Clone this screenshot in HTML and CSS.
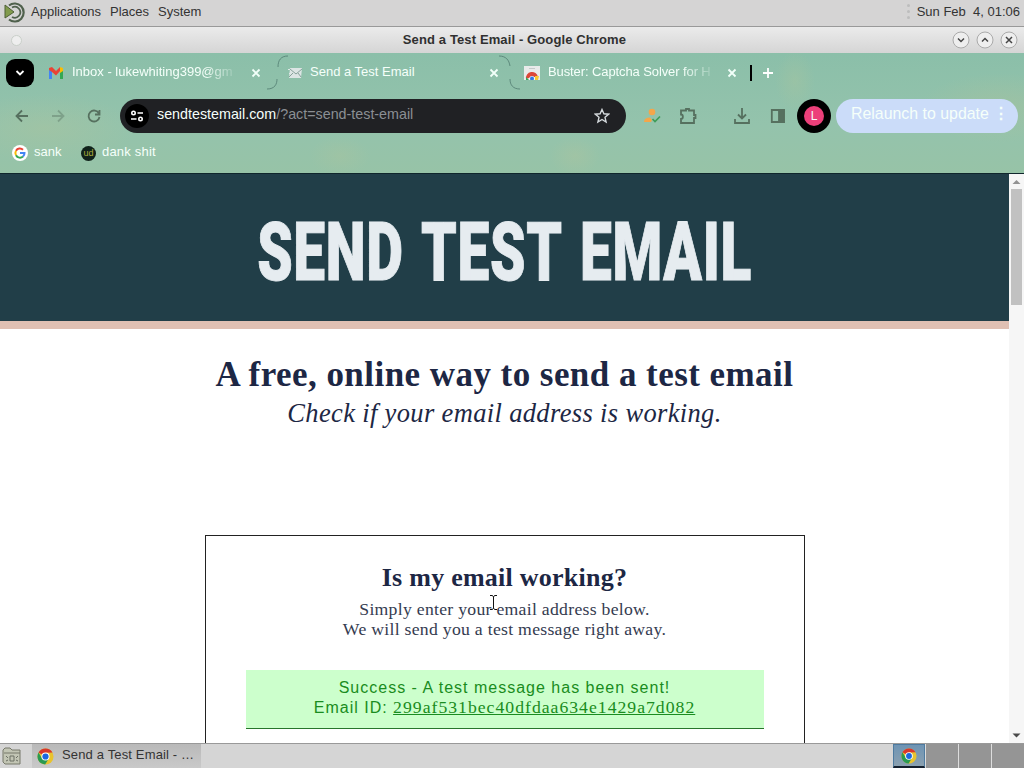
FILE: index.html
```html
<!DOCTYPE html>
<html lang="en">
<head>
  <meta charset="UTF-8">
  <title>Send a Test Email</title>
  <link rel="stylesheet" href="styles.css">
</head>
<body>
  <svg width="0" height="0" class="defs">
    <symbol id="chrome" viewBox="0 0 18 18">
      <circle cx="9" cy="9" r="8.5" fill="#e8c32e"/>
      <path d="M9 9 1.6 4.8A8.5 8.5 0 0 1 16.4 4.8L9 5z" fill="#d8372c"/>
      <path d="M1.6 4.8A8.5 8.5 0 0 0 8.6 17.5L12.5 11 9 9 5.4 11z" fill="#299a51"/>
      <circle cx="9" cy="9" r="4.3" fill="#fff"/>
      <circle cx="9" cy="9" r="3.3" fill="#1b67e0"/>
    </symbol>
    <symbol id="close" viewBox="0 0 10 10">
      <path d="M1.5 1.5l7 7M8.5 1.5l-7 7" stroke="#f2fff9" stroke-width="1.8"/>
    </symbol>
  </svg>

  <div class="panel">
    <svg class="mate" width="22" height="22" viewBox="0 0 22 22" fill="none">
      <path d="M1 4l9 7-9 6z" fill="#829b4d" stroke="#4e6036"/>
      <path d="M5 4.500A9 9 0 1 1 5 18.500" stroke="#50614d" stroke-width="2.200"/>
      <path d="M8 6.500A5.500 5.500 0 1 1 8 16" stroke="#50614d" stroke-width="1.800"/>
    </svg>
    <span class="apps">Applications</span>
    <span class="places">Places</span>
    <span>System</span>
    <span class="dots"><i></i><i></i><i></i></span>
    <span class="clock">Sun Feb&nbsp; 4, 01:06</span>
  </div>

  <div class="titlebar">
    <span class="win-menu"></span>
    <span class="win-title">Send a Test Email - Google Chrome</span>
    <span class="win-btns">
      <svg width="18" height="18" viewBox="0 0 18 18"><circle cx="9" cy="9" r="8"/><path d="M6 7.500l3 3 3-3"/></svg>
      <svg width="18" height="18" viewBox="0 0 18 18"><circle cx="9" cy="9" r="8"/><path d="M6 10.500l3-3 3 3"/></svg>
      <svg width="18" height="18" viewBox="0 0 18 18"><circle cx="9" cy="9" r="8"/><path d="M6 6l6 6M12 6l-6 6"/></svg>
    </span>
  </div>

  <div class="browser">
    <div class="tabs">
      <span class="tab-search"><svg width="10" height="8" viewBox="0 0 10 8"><path d="M1.500 2l3.500 3.500L8.500 2" fill="none" stroke="#fff" stroke-width="1.800"/></svg></span>
      <div class="tab tab-1">
        <svg width="16" height="14" viewBox="0 0 16 14">
          <path d="M1 2v11h3V5z" fill="#4285f4"/><path d="M12 5v8h3V2z" fill="#34a853"/>
          <path d="M1 2l3-1 4 4 4-4v4L8 9.500 4 6 1 4z" fill="#ea4335"/><path d="M12 1l3 1v3l-3 2z" fill="#fbbc04"/>
        </svg>
        <span class="tab-text fade">Inbox - lukewhiting399@gm</span>
        <svg width="10" height="10"><use href="#close"/></svg>
      </div>
      <svg class="curve" width="24" height="36" viewBox="0 0 24 36"><path d="M1 34c8 0 10-5 10-10M12 12C12 5 15 1 22 1"/></svg>
      <div class="tab tab-2">
        <svg width="14" height="10" viewBox="0 0 14 10"><path d="M0 1h3v1H0zM1 5h3v1H1z" fill="#dfe9e7"/><path d="M2 0h12l-1 10H1z" fill="#dce5e4"/><path d="M2 1l6 5 6-5M1 9l4-4M13 9l-3-4" stroke="#88a29b" fill="none"/></svg>
        <span class="tab-text">Send a Test Email</span>
        <svg width="10" height="10"><use href="#close"/></svg>
      </div>
      <svg class="curve" width="24" height="36" viewBox="0 0 24 36"><path d="M1 1c7 0 10 4 11 10M12 24c0 6 3 10 10 10"/></svg>
      <div class="tab tab-3">
        <svg width="16" height="14" viewBox="0 0 16 14"><path d="M0 0h16v14H0z" fill="#e9ebea"/><path d="M5 2.500h6" stroke="#c5caca"/><path d="M2 13a6 6 0 0 1 12-2H8z" fill="#dc4738"/><path d="M2 11l3 3H2z" fill="#35a75a"/><path d="M11 10h4l-1 4h-3z" fill="#f5c934"/><circle cx="8" cy="12.500" r="2.600" fill="#fff"/><circle cx="8" cy="12.500" r="2" fill="#3579e1"/></svg>
        <span class="tab-text fade">Buster: Captcha Solver for H</span>
        <svg width="10" height="10"><use href="#close"/></svg>
      </div>
      <span class="tab-bar"></span>
      <svg width="12" height="12" viewBox="0 0 12 12"><path d="M6 1v10M1 6h10" stroke="#fff" stroke-width="1.800"/></svg>
    </div>

    <div class="toolbar">
      <svg class="nav" width="16" height="16" viewBox="0 0 16 16"><path d="M14 8H3M8 2.500L2.500 8 8 13.500"/></svg>
      <svg class="nav off" width="16" height="16" viewBox="0 0 16 16"><path d="M2 8H13M8 2.500L13.500 8 8 13.500"/></svg>
      <svg class="nav" width="16" height="16" viewBox="0 0 16 16"><path d="M13 5.500A5.500 5.500 0 1 0 13.500 9M13.500 2v4.500H9"/></svg>
      <div class="address">
        <span class="site-info"><svg width="14" height="12" viewBox="0 0 14 12" fill="none" stroke="#fff" stroke-width="1.600"><circle cx="3.500" cy="3" r="1.700"/><path d="M7.500 3H13M1 9h5.500"/><circle cx="10.500" cy="9" r="1.700"/></svg></span>
        <span class="url">sendtestemail.com<b>/?act=send-test-email</b></span>
        <svg width="16" height="16" viewBox="0 0 16 16"><path d="M8 1.500l1.900 4.300 4.700.4L11 9.300l1.100 4.700L8 11.500 3.900 14 5 9.300 1.400 6.200l4.700-.4z" fill="none" stroke="#d5dadd" stroke-width="1.400"/></svg>
      </div>
      <svg class="ext" width="18" height="16" viewBox="0 0 18 16"><circle cx="9" cy="4" r="3.300" fill="#f4a64a"/><path d="M1 14c0-3 2-4.500 6-4.500l2 2.500-1 2z" fill="#f4a64a"/><path d="M9.500 11l2.500 2.500L17 8.500" fill="none" stroke="#3e9c58" stroke-width="1.700"/></svg>
      <svg class="puzzle" width="18" height="18" viewBox="0 0 18 18"><path d="M2 3.500h5V2h3v1.500h5V8h1.500v3H15v5H2v-4c2.500 0 2.500-4.500 0-4.500z"/></svg>
      <svg class="download" width="18" height="18" viewBox="0 0 18 18"><path d="M9 1v10M5 7.500l4 4 4-4M2 12v4h14v-4"/></svg>
      <svg class="side" width="16" height="16" viewBox="0 0 16 16"><path d="M1.800 2h12v12h-12z"/><path d="M9 2h5v12H9z" fill="#56705f"/></svg>
      <span class="avatar"><i>L</i></span>
      <span class="relaunch">Relaunch to update <i>⋮</i></span>
    </div>

    <div class="bookmarks">
      <svg width="16" height="16" viewBox="0 0 16 16" fill="none" stroke-width="2"><circle cx="8" cy="8" r="8" fill="#fff"/><path d="M4 5.800a4.500 4.500 0 0 1 7-1" stroke="#ea4335"/><path d="M4 5.800a4.500 4.500 0 0 0 0 4.500" stroke="#fbbc04"/><path d="M4 10.300a4.500 4.500 0 0 0 7 1.200" stroke="#34a853"/><path d="M8 8h4.500a4.500 4.500 0 0 1-1.500 3.500" stroke="#4285f4"/></svg>
      <span class="sank">sank</span>
      <span class="ud">ud</span>
      <span class="dank">dank shit</span>
    </div>
  </div>

  <div class="view">
    <div class="page">
      <header><h1>SEND TEST EMAIL</h1></header>
      <h2>A free, online way to send a test email</h2>
      <p class="tagline">Check if your email address is working.</p>
      <div class="box">
        <h3>Is my email working?</h3>
        <p class="line-1">Simply enter your email address below.</p>
        <p class="line-2">We will send you a test message right away.</p>
        <div class="success">
          <div class="sent">Success - A test message has been sent!</div>
          <div class="id-row"><span>Email ID:</span> <a>299af531bec40dfdaa634e1429a7d082</a></div>
        </div>
      </div>
    </div>
    <div class="scroll">
      <svg width="15" height="15" viewBox="0 0 15 15"><path d="M3.500 10h8L7.500 6z" fill="#929292"/></svg>
      <span class="thumb"></span>
      <svg width="15" height="15" viewBox="0 0 15 15"><path d="M3.500 5.500h8l-4 4z" fill="#4a4a4a"/></svg>
    </div>
    <svg class="cursor" width="9" height="17" viewBox="0 0 9 17"><path d="M1 1.500h2.500L4.500 3l1-1.500H8M4.500 3v11M1 15.500h2.500l1-1.500 1 1.500H8" fill="none" stroke="#111"/></svg>
  </div>

  <div class="taskbar">
    <svg class="files" width="20" height="19" viewBox="0 0 20 19"><path d="M1 15V3l2-2h5l2 2h8v14H3z" fill="#c2c5b4" stroke="#77796b"/><path d="M2 6h16" stroke="#77796b"/><path d="M8 9h4v5H8zM4 9l2 2M16 9l-2 2M4 14l2-1M16 14l-2-1" fill="none" stroke="#6d7065"/></svg>
    <span class="task"><svg width="17" height="17"><use href="#chrome"/></svg><span>Send a Test Email - …</span></span>
    <div class="workspaces">
      <span class="current"><svg width="16" height="16"><use href="#chrome"/></svg></span><span></span><span></span><span></span>
    </div>
  </div>
</body>
</html>
```

FILE: styles.css
```css
* {
  box-sizing: border-box;
}
body {
  margin: 0;
  width: 1024px;
  height: 768px;
  overflow: hidden;
  font-family: "Liberation Sans", Arial, sans-serif;
  font-size: 13px;
  color: #333;
  display: flex;
  flex-direction: column;
}
h1, h2, h3, p {
  margin: 0;
  white-space: nowrap;
}
i {
  font-style: normal;
}
svg {
  flex: none;
}
.defs {
  position: absolute;
}

/* desktop panel */
.panel {
  height: 27px;
  flex: none;
  background: #d5d4d4;
  border-bottom: 1px solid #999;
  display: flex;
  align-items: center;
  padding: 0 4px 2px 4px;
}
.panel > span {
  padding-bottom: 2px;
}
.apps {
  margin-left: 5px;
  width: 79px;
}
.places {
  width: 48px;
}
.dots {
  margin-left: auto;
  margin-right: 7px;
  display: grid;
  gap: 3px;
}
.dots i {
  width: 3px;
  height: 3px;
  border-radius: 2px;
  background: #bdbdbd;
}
.titlebar {
  height: 26px;
  flex: none;
  background: linear-gradient(#ebebeb, #d5d5d5);
  display: grid;
  grid-template-columns: 80px 1fr 75px;
  align-items: center;
}
.win-menu {
  width: 11px;
  height: 11px;
  margin-left: 11px;
  border-radius: 50%;
  border: 1px solid #c9cfc9;
  background: #eee;
}
.win-title {
  font-weight: bold;
  font-size: 13px;
  letter-spacing: .12px;
  text-align: center;
  padding-bottom: 2px;
  color: #303030;
}
.win-btns {
  display: flex;
  gap: 6px;
  margin-left: 3px;
}
.win-btns circle {
  fill: #eee;
  stroke: #aaa;
}
.win-btns path {
  fill: none;
  stroke: #444;
  stroke-width: 1.5;
}

/* browser */
.browser {
  height: 121px;
  flex: none;
  border-bottom: 1px solid #10262c;
  color: #f5fffa;
  background:
    radial-gradient(ellipse 90px 34px at 45px 75px, rgba(166, 196, 160, .6), transparent 100%),
    radial-gradient(ellipse 25px 20px at 575px 103px, rgba(170, 196, 160, .5), transparent 100%),
    radial-gradient(ellipse 30px 20px at 340px 103px, rgba(166, 196, 160, .5), transparent 100%),
    radial-gradient(ellipse 80px 35px at 1000px 55px, rgba(166, 194, 158, .6), transparent 100%),
    radial-gradient(ellipse 20px 30px at 795px 28px, rgba(164, 196, 160, .5), transparent 100%),
    linear-gradient(#8bbfa9, #94c3ac 60%, #97c3a7);
}
.tabs {
  height: 38px;
  display: flex;
  align-items: center;
  padding-top: 2px;
}
.tab-search {
  width: 28px;
  height: 28px;
  margin-left: 6px;
  border-radius: 9px;
  background: #000;
  display: grid;
  place-items: center;
}
.tab {
  display: flex;
  align-items: center;
  flex: none;
}
.tab-1 {
  margin-left: 14px;
  width: 218px;
}
.tab-2 {
  width: 214px;
  margin-left: -2px;
  margin-right: -4px;
}
.tab-3 {
  width: 218px;
  margin-left: 2px;
}
.tab-text {
  margin-left: 8px;
  margin-right: auto;
  white-space: nowrap;
  padding-bottom: 3px;
}
.fade {
  -webkit-mask-image: linear-gradient(90deg, #000 82%, rgba(0, 0, 0, .2));
}
.tab-3 .tab-text {
  letter-spacing: -.1px;
}
.tab > svg:last-child {
  margin-right: 5px;
}
.tabs .tab-2 > svg:last-child {
  margin-right: 3px;
}
.curve {
  fill: none;
  stroke: #507b70;
  stroke-width: .8;
}
.tab-bar {
  width: 2px;
  height: 16px;
  margin-left: 8px;
  margin-right: 10px;
  background: #000;
}
.toolbar {
  height: 50px;
  display: flex;
  align-items: center;
  padding-left: 14px;
}
.nav, .puzzle, .download, .side {
  fill: none;
  stroke: #56705f;
  stroke-width: 1.8;
}
.nav {
  margin-right: 20px;
}
.off {
  opacity: .4;
}
.address {
  width: 506px;
  height: 34px;
  margin-left: -2px;
  border-radius: 17px;
  background: #202124;
  display: flex;
  align-items: center;
  padding: 0 16px 0 5px;
  flex: none;
}
.site-info {
  width: 24px;
  height: 24px;
  border-radius: 50%;
  background: #000;
  display: grid;
  place-items: center;
}
.url {
  font-size: 14.3px;
  margin-left: 8px;
  margin-right: auto;
  padding-bottom: 4px;
}
.url b {
  color: #8b8f94;
  font-weight: normal;
}
.ext {
  margin-left: 17px;
}
.puzzle {
  margin-left: 18px;
}
.download {
  margin-left: 36px;
}
.side {
  margin-left: 19px;
}
.avatar {
  width: 34px;
  height: 34px;
  margin-left: 11px;
  border-radius: 50%;
  background: #000;
  display: grid;
  place-items: center;
  flex: none;
}
.avatar i {
  width: 20px;
  height: 20px;
  border-radius: 50%;
  background: #ec407a;
  font-size: 12px;
  line-height: 20px;
  text-align: center;
}
.relaunch {
  width: 182px;
  height: 34px;
  margin-left: 5px;
  padding: 5px 0 0 15px;
  border-radius: 17px;
  background: #cbdcf9;
  font-size: 15.9px;
  white-space: nowrap;
  flex: none;
}
.relaunch i {
  font-weight: bold;
}
.bookmarks {
  height: 24px;
  display: flex;
  align-items: center;
  padding-left: 12px;
}
.bookmarks span {
  padding-bottom: 3px;
}
.bookmarks .sank {
  margin-left: 6px;
  width: 47px;
}
.bookmarks .ud {
  width: 15px;
  height: 15px;
  margin-right: 6px;
  padding: 0;
  border-radius: 50%;
  background: #10221a;
  color: #a8ab3c;
  font-size: 9px;
  line-height: 14px;
  text-align: center;
}
.dank {
  letter-spacing: .2px;
}

/* web page */
.view {
  height: 569px;
  flex: none;
  display: flex;
  position: relative;
  overflow: hidden;
  background: #fff;
}
.page {
  width: 1009px;
  display: flex;
  flex-direction: column;
  align-items: center;
  font-family: "Liberation Serif", serif;
  color: #1d2744;
}
header {
  width: 100%;
  height: 155px;
  flex: none;
  background: #213e48;
  border-bottom: 8px solid #dfc0b3;
  display: grid;
  place-items: center;
}
h1 {
  font-family: Roboto, sans-serif;
  font-weight: 900;
  font-size: 82px;
  line-height: 100px;
  margin-top: 9px;
  color: #e6ecf0;
  word-spacing: 6px;
  letter-spacing: 1px;
  -webkit-text-stroke: 1px #e6ecf0;
  transform: scaleX(.692);
}
h2 {
  font-size: 35px;
  line-height: 40px;
  margin-top: 26px;
  letter-spacing: .45px;
}
.tagline {
  font-size: 26.5px;
  font-style: italic;
  line-height: 32px;
  margin-top: 2px;
  letter-spacing: .35px;
}
.box {
  width: 600px;
  height: 300px;
  flex: none;
  margin-top: 106px;
  border: 1px solid #222;
  display: flex;
  flex-direction: column;
  align-items: center;
}
h3 {
  font-size: 26px;
  line-height: 30px;
  margin-top: 27px;
  letter-spacing: .25px;
}
.line-1, .line-2 {
  font-size: 17.7px;
  line-height: 20px;
  color: #343b50;
  letter-spacing: .28px;
}
.line-1 {
  margin-top: 6px;
}
.success {
  width: 518px;
  height: 59px;
  margin-top: 31px;
  padding-top: 8px;
  background: #cfc;
  border-bottom: 1px solid #26752b;
  color: #198c20;
  text-align: center;
  font-family: "Liberation Sans", sans-serif;
  font-size: 16px;
  line-height: 20px;
  letter-spacing: 1px;
  white-space: nowrap;
}
.id-row {
  margin-top: -1px;
}
.success a {
  font-family: "Liberation Serif", serif;
  font-size: 17.7px;
  text-decoration: underline;
}
.scroll {
  width: 15px;
  background: #f6f6f6;
  display: flex;
  flex-direction: column;
}
.thumb {
  width: 11px;
  height: 116px;
  margin: 0 2px auto;
  background: #c1c1c1;
}
.cursor {
  position: absolute;
  left: 489px;
  top: 420px;
}

/* taskbar */
.taskbar {
  height: 25px;
  flex: none;
  background: #d5d5d5;
  border-top: 1px solid #999;
  display: flex;
  align-items: center;
}
.files {
  margin: 0 10px 0 2px;
}
.task {
  width: 169px;
  height: 24px;
  padding-left: 5px;
  display: flex;
  align-items: center;
  gap: 8px;
  background: linear-gradient(#b9b9b9, #c9c9c9);
  white-space: nowrap;
}
.task span {
  padding-bottom: 3px;
  letter-spacing: .15px;
}
.workspaces {
  height: 24px;
  margin-left: auto;
  display: grid;
  grid-template-columns: 32px 32px 32px 32px;
  gap: 1px;
  background: #ddd;
}
.workspaces span {
  background: #959595;
}
.workspaces .current {
  display: grid;
  place-items: center;
  background: linear-gradient(#6e94b4, #8aa0b0);
  border: 1px solid #4e7ba0;
  border-bottom: 2px solid #14202e;
}
```
